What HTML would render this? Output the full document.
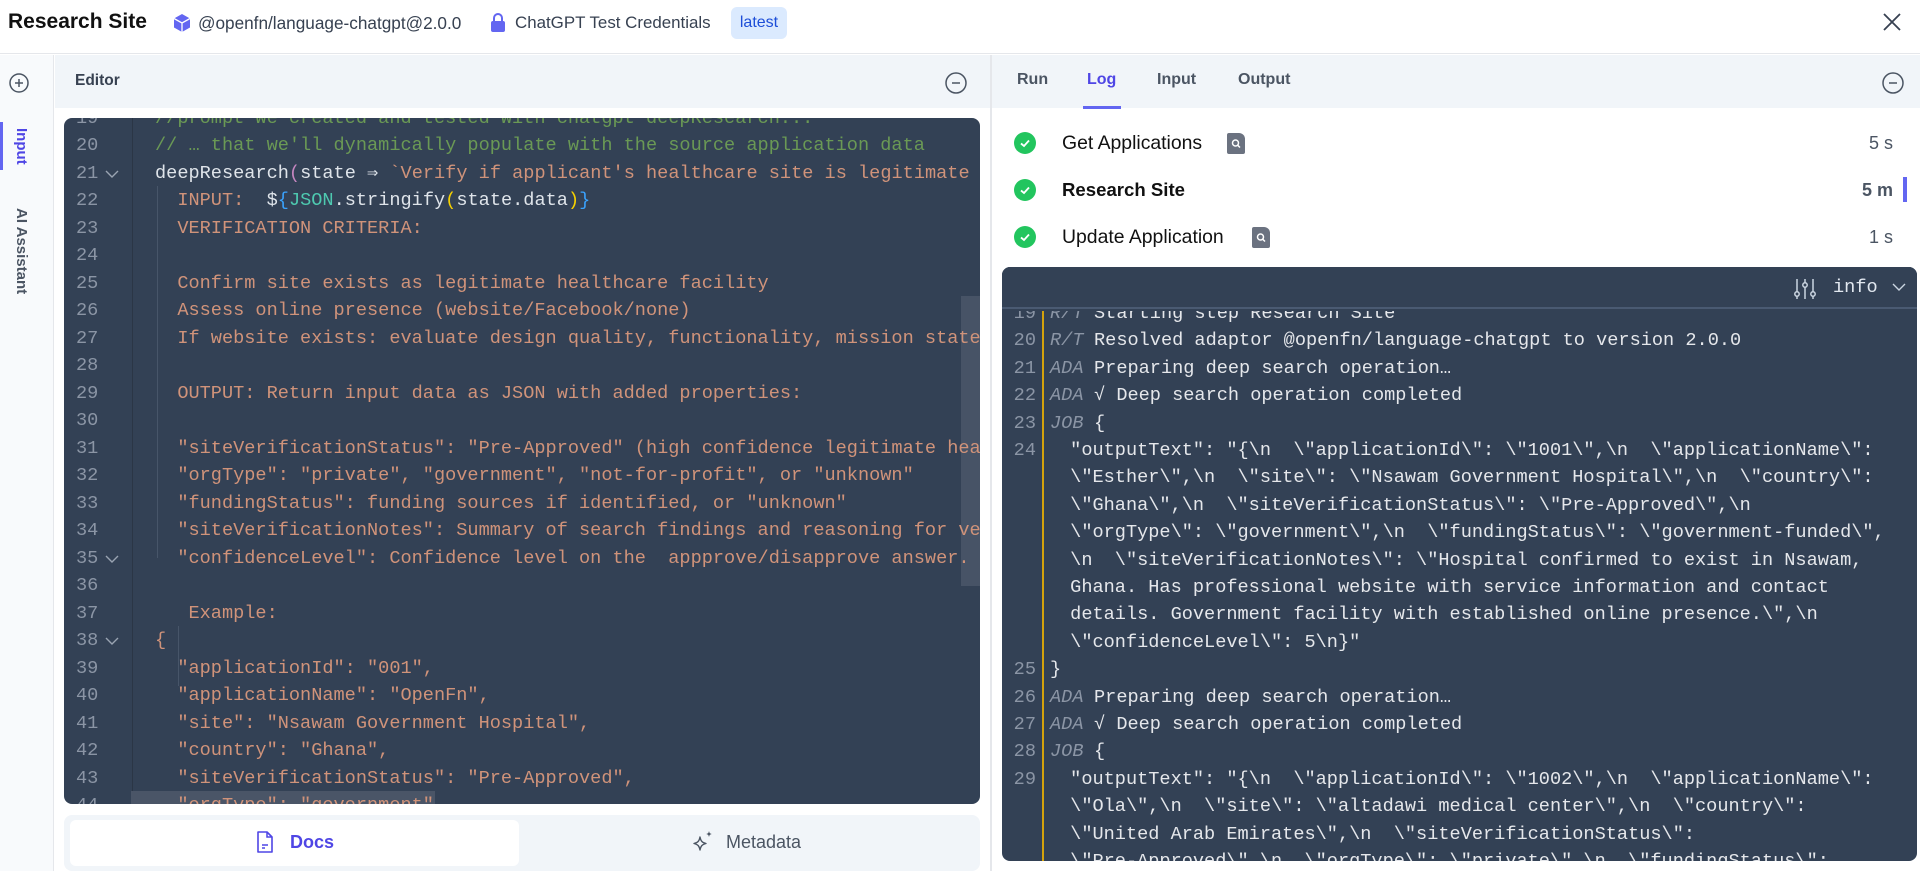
<!DOCTYPE html>
<html><head><meta charset="utf-8"><style>
*{box-sizing:border-box;margin:0;padding:0}
body{width:1920px;height:871px;overflow:hidden;background:#fff;font-family:"Liberation Sans",sans-serif;position:relative;color:#111827}
.abs{position:absolute}
.mono{font-family:"Liberation Mono",monospace;font-size:18.6px;white-space:pre}
.cl{position:absolute;left:0;height:27.5px;line-height:27.5px;white-space:pre}
.ln{position:absolute;width:40px;text-align:left;color:#8b95a5}
.s{color:#d0937a}.c{color:#6a9955}.w{color:#dfe4ea}.p{color:#c586c0}.b{color:#3aa3ff}.t{color:#4ec9b0}.y{color:#f5d000}
.lg{position:absolute;height:27.4px;line-height:27.4px;white-space:pre;color:#e5e7eb}
.lgn{position:absolute;left:0;width:34px;text-align:right;color:#8b95a5}
.pf{color:#8b95a5;font-style:italic}
</style></head><body>
<!-- header -->
<div class="abs" style="left:0;top:0;width:1920px;height:54px;border-bottom:1px solid #e5e7eb;background:#fff"></div>
<div class="abs" style="left:8px;top:10px;font-size:21px;font-weight:bold;color:#111">Research Site</div>
<svg class="abs" style="left:173px;top:13px" width="18" height="20" viewBox="0 0 18 20"><path d="M9 1L17 5.5V14.5L9 19L1 14.5V5.5Z" fill="#6366f1"/><path d="M1 5.5L9 10L17 5.5M9 10V19" stroke="#fff" stroke-width="1.3" fill="none"/></svg>
<div class="abs" style="left:198px;top:13px;font-size:17.2px;color:#374151">@openfn/language-chatgpt@2.0.0</div>
<svg class="abs" style="left:490px;top:12px" width="16" height="21" viewBox="0 0 16 21"><path d="M4 9V6a4 4 0 0 1 8 0v3" stroke="#6366f1" stroke-width="2" fill="none"/><rect x="1" y="9" width="14" height="11" rx="2" fill="#6366f1"/></svg>
<div class="abs" style="left:515px;top:13px;font-size:16.9px;color:#374151">ChatGPT Test Credentials</div>
<div class="abs" style="left:731px;top:7px;width:56px;height:32px;background:#dbeafe;border-radius:6px;font-size:16px;color:#1d4ed8;text-align:center;line-height:32px">latest</div>
<svg class="abs" style="left:1882px;top:12px" width="20" height="20" viewBox="0 0 20 20"><path d="M2 2L18 18M18 2L2 18" stroke="#374151" stroke-width="1.8"/></svg>

<!-- left sidebar -->
<div class="abs" style="left:0;top:55px;width:54px;height:816px;background:#f8fafc;border-right:1px solid #e5e7eb"></div>
<svg class="abs" style="left:8px;top:72px" width="22" height="22" viewBox="0 0 22 22"><circle cx="11" cy="11" r="9" stroke="#4b5563" stroke-width="1.5" fill="none"/><path d="M11 7V15M7 11H15" stroke="#4b5563" stroke-width="1.5"/></svg>
<div class="abs" style="left:0;top:122px;width:3px;height:48px;background:#6366f1"></div>
<div class="abs" style="left:8px;top:128px;width:22px;height:40px;writing-mode:vertical-rl;font-size:15px;font-weight:bold;color:#4f46e5">Input</div>
<div class="abs" style="left:8px;top:208px;width:22px;height:92px;writing-mode:vertical-rl;font-size:15px;font-weight:bold;color:#4b5563">AI Assistant</div>

<!-- editor header -->
<div class="abs" style="left:55px;top:55px;width:935px;height:53px;background:#f1f5f9"></div>
<div class="abs" style="left:75px;top:72px;font-size:15.5px;font-weight:bold;color:#374151">Editor</div>
<svg class="abs" style="left:944px;top:71px" width="24" height="24" viewBox="0 0 24 24"><circle cx="12" cy="12" r="10" stroke="#4b5563" stroke-width="1.5" fill="none"/><path d="M8 12H16" stroke="#4b5563" stroke-width="1.5"/></svg>
<div class="abs" style="left:990px;top:55px;width:2px;height:816px;background:#e5e7eb"></div>

<!-- code panel -->
<div class="abs mono" style="left:64px;top:118px;width:916px;height:686px;background:#334155;border-radius:8px;overflow:hidden">
 <div class="abs" style="left:68px;top:0;width:1px;height:686px;background:#2b3646"></div>
 <div class="abs" style="left:0;top:-14px;width:916px;">
  <div class="abs" style="left:67px;top:687px;width:304px;height:27.5px;background:#4a5567"></div>
  <div class="abs" style="left:897px;top:192px;width:19px;height:290px;background:#475366"></div>
  <div class="abs" style="left:93px;top:82px;width:1px;height:372px;background:#475569"></div>
  <div class="abs" style="left:114px;top:522px;width:1px;height:60px;background:#475569"></div>
 </div>
 <div id="code" class="abs" style="left:0;top:-13.5px;width:916px"></div>
</div>

<!-- docs bar -->
<div class="abs" style="left:64px;top:815px;width:916px;height:56px;background:#f1f5f9;border-radius:8px"></div>
<div class="abs" style="left:70px;top:820px;width:449px;height:46px;background:#fff;border-radius:6px"></div>
<svg class="abs" style="left:256px;top:830px" width="18" height="24" viewBox="0 0 18 24"><path d="M2 2H11L16 7V22H2Z" stroke="#4f46e5" stroke-width="1.6" fill="none" stroke-linejoin="round"/><path d="M11 2V7H16M6 15H12M6 18H9" stroke="#4f46e5" stroke-width="1.5" fill="none"/></svg>
<div class="abs" style="left:290px;top:832px;font-size:18px;font-weight:bold;color:#4f46e5">Docs</div>
<svg class="abs" style="left:691px;top:829px" width="24" height="26" viewBox="0 0 24 26"><path d="M9 8C9.8 12 11 13.5 15 14.5 11 15.5 9.8 17 9 21 8.2 17 7 15.5 3 14.5 7 13.5 8.2 12 9 8Z" stroke="#4b5563" stroke-width="1.4" fill="none" stroke-linejoin="round"/><path d="M18 2C18.4 4 19 4.6 21 5 19 5.4 18.4 6 18 8 17.6 6 17 5.4 15 5 17 4.6 17.6 4 18 2Z" fill="#4b5563"/></svg>
<div class="abs" style="left:726px;top:832px;font-size:18px;color:#4b5563">Metadata</div>

<!-- right header tabs -->
<div class="abs" style="left:992px;top:55px;width:928px;height:53px;background:#f1f5f9"></div>
<div class="abs" style="left:1017px;top:71px;font-size:16px;color:#4b5563;font-weight:bold">Run</div>
<div class="abs" style="left:1087px;top:71px;font-size:16px;color:#4f46e5;font-weight:bold">Log</div>
<div class="abs" style="left:1083px;top:106px;width:38px;height:3px;background:#6366f1"></div>
<div class="abs" style="left:1157px;top:71px;font-size:16px;color:#4b5563;font-weight:bold">Input</div>
<div class="abs" style="left:1238px;top:71px;font-size:16px;color:#4b5563;font-weight:bold">Output</div>
<svg class="abs" style="left:1881px;top:71px" width="24" height="24" viewBox="0 0 24 24"><circle cx="12" cy="12" r="10" stroke="#4b5563" stroke-width="1.5" fill="none"/><path d="M8 12H16" stroke="#4b5563" stroke-width="1.5"/></svg>

<!-- steps -->
<div id="steps"></div>
<div class="abs" style="left:1903px;top:177px;width:4px;height:25px;background:#6366f1"></div>

<!-- log panel -->
<div class="abs mono" style="left:1002px;top:267px;width:915px;height:594px;background:#334155;border-radius:8px;overflow:hidden">
 <div class="abs" style="left:0;top:0;width:915px;height:42px;background:#334155;border-bottom:2px solid #4a5a72"></div>
 <svg class="abs" style="left:791px;top:10px" width="24" height="24" viewBox="0 0 24 24"><path d="M4 2V22M12 2V22M20 2V22" stroke="#cbd5e1" stroke-width="1.5"/><circle cx="4" cy="17" r="2.2" fill="#334155" stroke="#cbd5e1" stroke-width="1.5"/><circle cx="12" cy="8" r="2.2" fill="#334155" stroke="#cbd5e1" stroke-width="1.5"/><circle cx="20" cy="17" r="2.2" fill="#334155" stroke="#cbd5e1" stroke-width="1.5"/></svg>
 <div class="abs" style="left:831px;top:6px;color:#e2e8f0;line-height:30px">info</div>
 <svg class="abs" style="left:889px;top:14px" width="16" height="12" viewBox="0 0 16 12"><path d="M2 3L8 9L14 3" stroke="#cbd5e1" stroke-width="1.4" fill="none"/></svg>
 <div class="abs" style="left:0;top:44px;width:915px;height:550px;overflow:hidden">
  <div class="abs" style="left:40px;top:0;width:2px;height:560px;background:#d4a20c"></div>
  <div id="log" class="abs" style="left:0;top:-11px;width:915px"></div>
 </div>
</div>

<script>
function esc(s){return s.replace(/&/g,'&amp;').replace(/</g,'&lt;')}
var code=[
[19,'<span class="c">//prompt we created and tested with chatgpt deepResearch...</span>'],
[20,'<span class="c">// … that we\'ll dynamically populate with the source application data</span>'],
[21,'<span class="w">deepResearch</span><span class="p">(</span><span class="w">state ⇒ </span><span class="s">`Verify if applicant\'s healthcare site is legitimate</span>',1],
[22,'<span class="s">  INPUT:  </span><span class="w">$</span><span class="b">{</span><span class="t">JSON</span><span class="w">.stringify</span><span class="y">(</span><span class="w">state.data</span><span class="y">)</span><span class="b">}</span>'],
[23,'<span class="s">  VERIFICATION CRITERIA:</span>'],
[24,''],
[25,'<span class="s">  Confirm site exists as legitimate healthcare facility</span>'],
[26,'<span class="s">  Assess online presence (website/Facebook/none)</span>'],
[27,'<span class="s">  If website exists: evaluate design quality, functionality, mission statement</span>'],
[28,''],
[29,'<span class="s">  OUTPUT: Return input data as JSON with added properties:</span>'],
[30,''],
[31,'<span class="s">  "siteVerificationStatus": "Pre-Approved" (high confidence legitimate healthcare</span>'],
[32,'<span class="s">  "orgType": "private", "government", "not-for-profit", or "unknown"</span>'],
[33,'<span class="s">  "fundingStatus": funding sources if identified, or "unknown"</span>'],
[34,'<span class="s">  "siteVerificationNotes": Summary of search findings and reasoning for verification</span>'],
[35,'<span class="s">  "confidenceLevel": Confidence level on the  appprove/disapprove answer.</span>',1],
[36,''],
[37,'<span class="s">   Example:</span>'],
[38,'<span class="s">{</span>',1],
[39,'<span class="s">  "applicationId": "001",</span>'],
[40,'<span class="s">  "applicationName": "OpenFn",</span>'],
[41,'<span class="s">  "site": "Nsawam Government Hospital",</span>'],
[42,'<span class="s">  "country": "Ghana",</span>'],
[43,'<span class="s">  "siteVerificationStatus": "Pre-Approved",</span>'],
[44,'<span class="s">  "orgType": "government",</span>']
];
var h='';
code.forEach(function(r,i){
 var y=i*27.5;
 h+='<div class="cl" style="top:'+y+'px;width:916px"><span class="ln" style="left:12px">'+r[0]+'</span>'+(r[2]?'<svg style="position:absolute;left:40px;top:9px" width="16" height="10" viewBox="0 0 16 10"><path d="M2 2L8 8L14 2" stroke="#9aa4b2" stroke-width="1.4" fill="none"/></svg>':'')+'<span style="position:absolute;left:91px">'+r[1]+'</span></div>';
});
document.getElementById('code').innerHTML=h;

var steps=[['Get Applications','5 s',143,false,1227],['Research Site','5 m',190,true,0],['Update Application','1 s',237,false,1252]];
var sh='';
steps.forEach(function(s){
 sh+='<svg class="abs" style="left:1014px;top:'+(s[2]-11)+'px" width="22" height="22" viewBox="0 0 22 22"><circle cx="11" cy="11" r="11" fill="#22c55e"/><path d="M7 11.5L10 14L15 8.5" stroke="#fff" stroke-width="1.8" fill="none"/></svg>';
 sh+='<div class="abs" style="left:1062px;top:'+(s[2]-11)+'px;font-size:19.4px;line-height:22px;color:#111;'+(s[3]?'font-weight:bold;font-size:18.6px':'')+'">'+s[0]+'</div>';
 if(s[4])sh+='<div class="abs" style="left:'+s[4]+'px;top:'+(s[2]-10)+'px;width:18px;height:21px;background:#6b7280;border-radius:2px 6px 2px 2px"><svg width="18" height="21" viewBox="0 0 18 21"><circle cx="8.5" cy="10" r="3" stroke="#fff" stroke-width="1.5" fill="none"/><path d="M10.7 12.2L13 14.5" stroke="#fff" stroke-width="1.5"/></svg></div>';
 sh+='<div class="abs" style="left:1840px;width:53px;text-align:right;top:'+(s[2]-11)+'px;font-size:18px;line-height:22px;color:#4b5563;'+(s[3]?'font-weight:bold':'')+'">'+s[1]+'</div>';
});
document.getElementById('steps').innerHTML=sh;

var log=[
[19,'R/T','Starting step Research Site'],
[20,'R/T','Resolved adaptor @openfn/language-chatgpt to version 2.0.0'],
[21,'ADA','Preparing deep search operation…'],
[22,'ADA','√ Deep search operation completed'],
[23,'JOB','{'],
[24,null,' "outputText": "{\\n  \\"applicationId\\": \\"1001\\",\\n  \\"applicationName\\":'],
[0,null,' \\"Esther\\",\\n  \\"site\\": \\"Nsawam Government Hospital\\",\\n  \\"country\\":'],
[0,null,' \\"Ghana\\",\\n  \\"siteVerificationStatus\\": \\"Pre-Approved\\",\\n'],
[0,null,' \\"orgType\\": \\"government\\",\\n  \\"fundingStatus\\": \\"government-funded\\",'],
[0,null,' \\n  \\"siteVerificationNotes\\": \\"Hospital confirmed to exist in Nsawam,'],
[0,null,' Ghana. Has professional website with service information and contact'],
[0,null,' details. Government facility with established online presence.\\",\\n'],
[0,null,' \\"confidenceLevel\\": 5\\n}"'],
[25,null,'}'],
[26,'ADA','Preparing deep search operation…'],
[27,'ADA','√ Deep search operation completed'],
[28,'JOB','{'],
[29,null,' "outputText": "{\\n  \\"applicationId\\": \\"1002\\",\\n  \\"applicationName\\":'],
[0,null,' \\"Ola\\",\\n  \\"site\\": \\"altadawi medical center\\",\\n  \\"country\\":'],
[0,null,' \\"United Arab Emirates\\",\\n  \\"siteVerificationStatus\\":'],
[0,null,' \\"Pre-Approved\\",\\n  \\"orgType\\": \\"private\\",\\n  \\"fundingStatus\\":']
];
var lh='';
log.forEach(function(r,i){
 var y=i*27.4;
 lh+='<div class="lg" style="top:'+y+'px;width:915px">'+(r[0]?'<span class="lgn">'+r[0]+'</span>':'');
 if(r[1]) lh+='<span class="pf" style="position:absolute;left:48px">'+r[1]+'</span><span style="position:absolute;left:92px">'+esc(r[2])+'</span>';
 else lh+='<span style="position:absolute;left:'+(r[2]=='}'?48:57)+'px">'+esc(r[2])+'</span>';
 lh+='</div>';
});
document.getElementById('log').innerHTML=lh;
</script>
</body></html>
